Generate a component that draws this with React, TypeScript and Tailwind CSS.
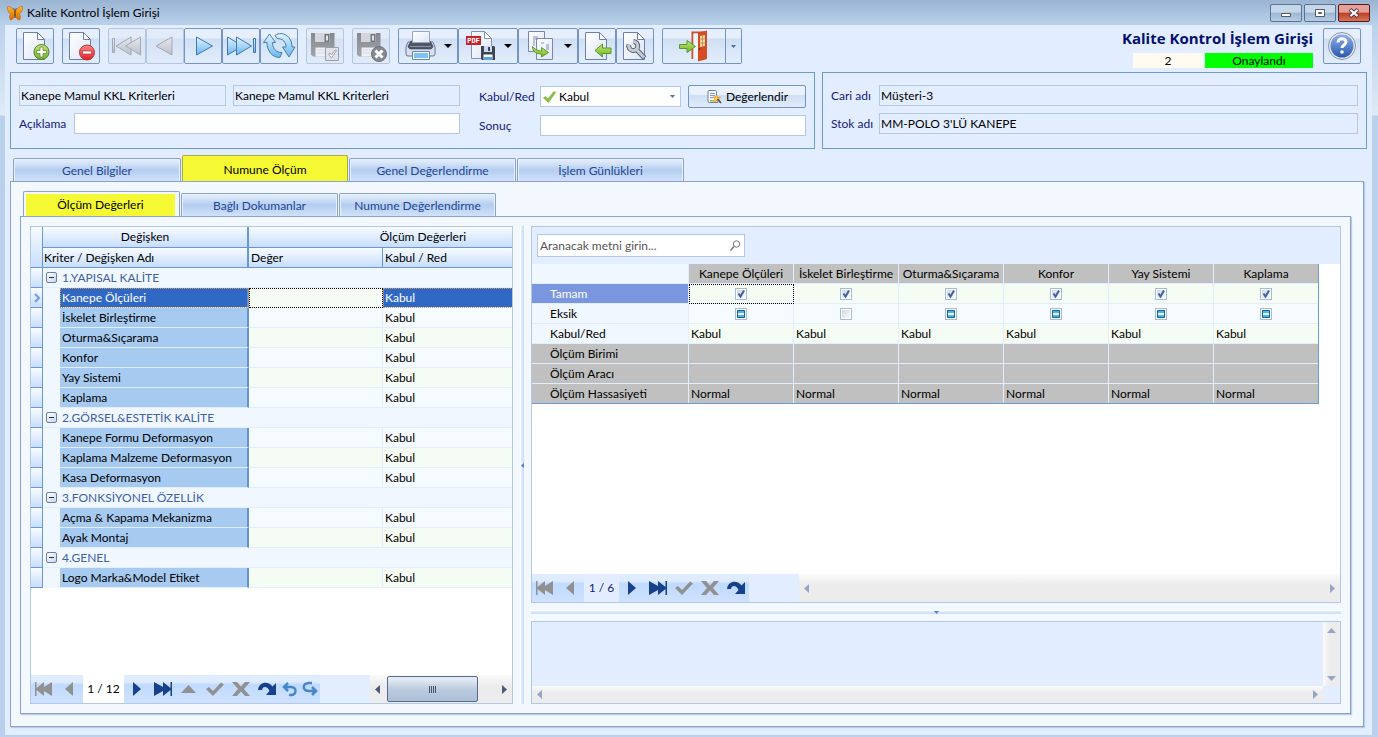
import type { ReactNode } from "react";

const toolButton =
  "h-9 flex shrink-0 items-center rounded-[2px] border border-[#7394c4] bg-linear-to-b from-[#e6effb] from-25% via-[#cfdff3] via-30% to-[#e3eefc]";
const toolButtonOff =
  "h-9 w-[38px] flex shrink-0 items-center rounded-[2px] border border-[#b3c6e0] bg-linear-to-b from-[#e2ebf8] from-25% via-[#d5e2f4] via-30% to-[#e0ebfa]";
const readOnlyBox =
  "h-[21px] min-w-0 border border-[#b3c8e4] bg-[#e2eeff] px-px text-black outline-none";
const editBox =
  "h-[21px] min-w-0 border border-[#b3c8e4] bg-white px-px text-black outline-none";
const headerFill = "bg-linear-to-b from-[#f8fbff] to-[#c7defd]";

interface IconProps {
  width?: number;
  children: ReactNode;
}

const Icon = ({ width = 36, children }: IconProps) => (
  <svg
    width={width}
    height="34"
    viewBox={`0 0 ${width} 34`}
    className="shrink-0"
    aria-hidden="true"
  >
    {children}
  </svg>
);

const Gradients = () => (
  <svg width="0" height="0" className="absolute" aria-hidden="true">
    <defs>
      <linearGradient id="paper" x1="0" y1="0" x2="1" y2="1">
        <stop offset="0" stopColor="#ffffff" />
        <stop offset="1" stopColor="#dde6f5" />
      </linearGradient>
      <linearGradient id="blue" x1="0" y1="0" x2="0" y2="1">
        <stop offset="0" stopColor="#e2f4ff" />
        <stop offset="1" stopColor="#6cb6ee" />
      </linearGradient>
      <linearGradient id="gray" x1="0" y1="0" x2="0" y2="1">
        <stop offset="0" stopColor="#e6e8ec" />
        <stop offset="1" stopColor="#bcc0c8" />
      </linearGradient>
      <linearGradient id="green" x1="0" y1="0" x2="0" y2="1">
        <stop offset="0" stopColor="#c5e878" />
        <stop offset="1" stopColor="#6db522" />
      </linearGradient>
      <linearGradient id="red" x1="0" y1="0" x2="0" y2="1">
        <stop offset="0" stopColor="#ff8a84" />
        <stop offset="1" stopColor="#e01f26" />
      </linearGradient>
      <linearGradient id="help" x1="0" y1="0" x2="0" y2="1">
        <stop offset="0" stopColor="#8db0e8" />
        <stop offset="1" stopColor="#2c59ad" />
      </linearGradient>
      <linearGradient id="wing" x1="0" y1="0" x2="0" y2="1">
        <stop offset="0" stopColor="#ffb52a" />
        <stop offset="1" stopColor="#d86b00" />
      </linearGradient>
      <linearGradient id="metal" x1="0" y1="0" x2="0" y2="1">
        <stop offset="0" stopColor="#85888e" />
        <stop offset="1" stopColor="#a0a3a8" />
      </linearGradient>
    </defs>
  </svg>
);

const Page = () => (
  <>
    <path d="M6.500 3.500h14l7 7v20h-21z" fill="url(#paper)" stroke="#6d7fae" />
    <path d="M20.500 3.500v7h7z" fill="#fff" stroke="#6d7fae" strokeLinejoin="round" />
  </>
);

const Floppy = () => (
  <>
    <path d="M4 4h23.500v23.500H6l-2-2z" fill="url(#metal)" />
    <path d="M8 4h15v9H8z" fill="#d3d6dc" />
    <path d="M17.500 5h5v8h-5z" fill="#73767c" />
    <path d="M19 6.500h2v5h-2z" fill="#e3e6ea" />
    <path d="M8.500 18.500h15v9h-15z" fill="#eceff4" />
    <path d="M10 21h12M10 24h12" stroke="#d6dae1" />
  </>
);

const Caret = () => (
  <svg width="8" height="4" viewBox="0 0 8 4" className="shrink-0" aria-hidden="true">
    <path d="M0 0h8L4 4z" fill="#000" />
  </svg>
);

const Toolbar = () => (
  <div className="flex gap-2">
    <button aria-label="Yeni" className={`${toolButton} w-[38px]`}>
      <Icon>
        <Page />
        <circle cx="24.500" cy="23" r="7.500" fill="url(#green)" stroke="#56792f" />
        <path
          d="M23 18h3v3.500h3.500v3H26V28h-3v-3.500h-3.500v-3H23z"
          fill="#fff"
          stroke="#5d8a2c"
          strokeWidth=".8"
        />
      </Icon>
    </button>
    <button aria-label="Sil" className={`${toolButton} w-[38px]`}>
      <Icon>
        <Page />
        <circle cx="24" cy="23.500" r="7.500" fill="url(#red)" stroke="#b53039" />
        <path d="M19.500 22h9v3h-9z" fill="#fff" stroke="#a93236" strokeWidth=".7" />
      </Icon>
    </button>
    <div className="flex">
      <button aria-label="İlk kayıt" className={toolButtonOff}>
        <Icon>
          <g fill="url(#gray)" stroke="#a3a9b5">
            <path d="M3.500 9.500h2v14h-2z" />
            <path d="M22 8v18L7 17z" />
            <path d="M31.500 8v18l-15-9z" />
          </g>
        </Icon>
      </button>
      <button aria-label="Önceki kayıt" className={toolButtonOff}>
        <Icon>
          <path d="M25 8v18L9 17z" fill="url(#gray)" stroke="#a3a9b5" />
        </Icon>
      </button>
      <button aria-label="Sonraki kayıt" className={`${toolButton} w-[38px]`}>
        <Icon>
          <path d="M11.500 8v18l16-9z" fill="url(#blue)" stroke="#3f78b8" />
        </Icon>
      </button>
      <button aria-label="Son kayıt" className={`${toolButton} w-[38px]`}>
        <Icon>
          <g fill="url(#blue)" stroke="#3f78b8">
            <path d="M4.500 8v18l15-9z" />
            <path d="M13.500 8v18l15-9z" />
            <path d="M30.500 9.500h2v14h-2z" />
          </g>
        </Icon>
      </button>
      <button aria-label="Yenile" className={`${toolButton} w-[38px]`}>
        <Icon>
          <g fill="url(#blue)" stroke="#3f7fb0" strokeLinejoin="round">
            <path d="M8.500 5 2.500 13.500H6C6 22 11 28.500 19 28.500l2-5c-6 0-9.500-4-9.500-10h3z" />
            <path d="M28 28 21.500 18H25c0-5-3-8.500-9-8.500l-2-3c2-1.500 4-2 6-2 7 .5 11 6.500 11 13.500h3z" />
          </g>
        </Icon>
      </button>
    </div>
    <button aria-label="Kaydet" className={toolButtonOff}>
      <Icon>
        <Floppy />
        <path d="M18.500 18.500h13v13h-13z" fill="#dfe3e9" stroke="#9a9fa8" />
        <path
          d="m21.500 25 3 4 5-7.500-1.500-.5-3.500 5-1.500-2z"
          fill="#fff"
          stroke="#8a8f98"
          strokeWidth=".8"
        />
      </Icon>
    </button>
    <button aria-label="Vazgeç" className={toolButtonOff}>
      <Icon>
        <Floppy />
        <circle cx="26" cy="25" r="7.500" fill="#85888e" stroke="#6f7278" />
        <path d="m22.500 21.500 7 7m0-7-7 7" stroke="#fff" strokeWidth="3" />
      </Icon>
    </button>
    <div className="flex">
      <button aria-label="Yazdır" className={`${toolButton} w-[60px]`}>
        <Icon width={45}>
          <path d="M9 13h25l2 5v7q0 2-2 2H9q-2 0-2-2v-7z" fill="#d9dfec" stroke="#6b7896" />
          <path
            d="M12 12h19l3 5q0 2-2 3H11q-2-1-2-3z"
            fill="#4e5668"
            stroke="#373e4d"
            strokeWidth=".6"
          />
          <path d="M13.500 2.500h17v11h-17z" fill="url(#paper)" stroke="#98a6c6" />
          <path d="M11 17.500h21" stroke="#8a93a6" />
          <path d="M13.500 22.500h17v8h-17z" fill="#fff" stroke="#5f88bd" />
          <path d="M15 24h14v5H15z" fill="#7ec1f3" />
        </Icon>
        <Caret />
      </button>
      <button aria-label="PDF olarak kaydet" className={`${toolButton} w-[60px]`}>
        <Icon width={45}>
          <path d="M12.500 2.500h13l7 7v20h-20z" fill="url(#paper)" stroke="#8492b8" />
          <path d="M25.500 2.500v7h7z" fill="#fff" stroke="#8492b8" />
          <path d="M7 7h15v9H7z" fill="#c5242c" />
          <text
            x="14.500"
            y="14"
            textAnchor="middle"
            fill="#fff"
            fontSize="7"
            fontWeight="bold"
            fontFamily="Liberation Mono, monospace"
          >
            PDF
          </text>
          <path d="M22 17h13l1 1v13H23l-1-1z" fill="#3c4556" />
          <path d="M25 17h8v6h-8z" fill="#cdd9ee" />
          <path d="M29 18h2v4h-2z" fill="#3c4556" />
          <path d="M24.500 25.500h9v5h-9z" fill="#fff" />
          <path d="M25 28h8v3h-8z" fill="#58a4de" />
        </Icon>
        <Caret />
      </button>
      <button aria-label="Kopyala" className={`${toolButton} w-[60px]`}>
        <Icon width={45}>
          <path d="M9.500 2.500h16v20h-16z" fill="url(#paper)" stroke="#7787b2" />
          <path d="M17.500 9.500h16v21h-16z" fill="url(#paper)" stroke="#7787b2" />
          <path
            d="M14 8h5M14 10h5M14 12h2M14 14h2M14 16h2M22 14h3M27 16h3M27 18h3M27 20h3"
            stroke="#8291b8"
          />
          <path
            d="M13.500 17.500c3 3.500 6 4.500 9 4.500v-3.500l7 5-7 4.500v-3c-5 0-9-2-9-7.500z"
            fill="url(#green)"
            stroke="#5e962b"
          />
        </Icon>
        <Caret />
      </button>
      <button aria-label="Aktar" className={`${toolButton} w-[38px]`}>
        <Icon>
          <Page />
          <path
            d="m16 21.500 7.500-6.500v4H32v5.500h-8.500V28z"
            fill="url(#green)"
            stroke="#5e962b"
          />
        </Icon>
      </button>
      <button aria-label="Ayarlar" className={`${toolButton} w-[38px]`}>
        <Icon>
          <Page />
          <g fill="none">
            <path
              d="M12 15.500a4.500 4.500 0 1 0 4.500-3M19 20l8.500 9"
              stroke="#5f6776"
              strokeWidth="5"
            />
            <path
              d="M12 15.500a4.500 4.500 0 1 0 4.500-3M19 20l8 8.500"
              stroke="#c6ccd6"
              strokeWidth="3"
            />
          </g>
        </Icon>
      </button>
    </div>
    <div className="flex">
      <button aria-label="Çıkış" className={`${toolButton} w-[64px] rounded-r-none`}>
        <Icon width={62}>
          <path d="M29.500 30V3.500H42" fill="none" stroke="#c8502a" strokeWidth="2" />
          <path d="M30.500 30V4.500H35V30z" fill="#f1f4fa" />
          <path d="m35 3.500 9-2V30l-9 2.500z" fill="#d54b24" />
          <path d="M37 7 42 6v11l-5 1z" fill="#f4dca8" />
          <path d="M39.500 6.500v11M37 10h5M37 14h5" stroke="#b98443" strokeWidth=".8" />
          <path d="M36.500 19v2" stroke="#7d2a12" strokeWidth="1.500" />
          <path
            d="M16.500 15.500H24v-4l8.500 6-8.500 6v-4h-7.500z"
            fill="url(#green)"
            stroke="#5e962b"
          />
        </Icon>
      </button>
      <button
        aria-label="Çıkış seçenekleri"
        className={`${toolButton} w-4 justify-center rounded-l-none border-l-0`}
      >
        <svg width="5" height="3" viewBox="0 0 5 3" aria-hidden="true">
          <path d="M0 0h5L2.500 3z" fill="#4a72a8" />
        </svg>
      </button>
    </div>
  </div>
);

const TitleBar = () => (
  <header className="flex h-[25px] items-start pr-2 pl-[7px]">
    <h1 className="flex flex-1 items-center gap-1 pt-1 leading-[18px]">
      <svg width="16" height="16" viewBox="0 0 16 16" aria-hidden="true">
        <path
          d="M8 7C6 3 3 1 .5 1.500 0 5 1.500 8 4 9c-2 1-2 4-.5 6 2.500 0 3.500-3 4.500-6 1 3 2 6 4.500 6 1.500-2 1.500-5-.5-6 2.500-1 4-4 3.500-7.500C13 1 10 3 8 7z"
          fill="url(#wing)"
          stroke="#b25a06"
          strokeWidth=".5"
        />
        <path d="M8 5.500v7.500" stroke="#4d2500" />
        <path d="M8 5.500 6.500 3M8 5.500 9.500 3" stroke="#4d2500" strokeWidth=".6" />
      </svg>
      Kalite Kontrol İşlem Girişi
    </h1>
    <div className="flex gap-0.5 pt-1">
      <button
        aria-label="Simge durumuna küçült"
        className="flex h-[18px] w-8 items-center justify-center rounded-[2px] border border-[#5b7292] bg-linear-to-b from-[#c6d7ea] from-45% via-[#9db6d2] via-50% to-[#b7cde5]"
      >
        <svg width="12" height="12" viewBox="0 0 12 12" aria-hidden="true">
          <path d="M1.500 6.500h9v3h-9z" fill="#fff" stroke="#525b68" />
        </svg>
      </button>
      <button
        aria-label="Ekranı kapla"
        className="flex h-[18px] w-8 items-center justify-center rounded-[2px] border border-[#5b7292] bg-linear-to-b from-[#c6d7ea] from-45% via-[#9db6d2] via-50% to-[#b7cde5]"
      >
        <svg width="12" height="12" viewBox="0 0 12 12" aria-hidden="true">
          <path d="M1.500 2.500h9v7h-9z" fill="#fff" stroke="#525b68" />
          <path d="M4.500 5.500h3v1h-3z" fill="#fff" stroke="#525b68" />
        </svg>
      </button>
      <button
        aria-label="Kapat"
        className="flex h-[18px] w-8 items-center justify-center rounded-[2px] border border-[#5a1a1c] bg-linear-to-b from-[#e2a096] from-45% via-[#bd3c22] via-50% to-[#d2745c]"
      >
        <svg width="12" height="12" viewBox="0 0 12 12" aria-hidden="true">
          <path d="m2 2.500 8 7m0-7-8 7" stroke="#5b3a44" strokeWidth="4" />
          <path d="m2.500 3 7 6m0-6-7 6" stroke="#fff" strokeWidth="2.200" />
        </svg>
      </button>
    </div>
  </header>
);

const Summary = () => (
  <section className="flex gap-[7px]">
    <div className="grid h-[77px] w-[805px] shrink-0 grid-cols-[441px_1fr] gap-x-[19px] border border-[#6b9bd4] px-2 pt-3">
      <div className="flex flex-col gap-[7px]">
        <div className="flex gap-[7px]">
          <input
            aria-label="Kriter kodu"
            readOnly
            defaultValue="Kanepe Mamul KKL Kriterleri"
            className={`${readOnlyBox} w-[207px]`}
          />
          <input
            aria-label="Kriter adı"
            readOnly
            defaultValue="Kanepe Mamul KKL Kriterleri"
            className={`${readOnlyBox} flex-1`}
          />
        </div>
        <div className="flex items-center">
          <label htmlFor="aciklama" className="w-[55px] text-[#14207a]">
            Açıklama
          </label>
          <input id="aciklama" className={`${editBox} flex-1`} />
        </div>
      </div>
      <div className="flex flex-col gap-[7px]">
        <div className="flex h-[23px] items-center">
          <label htmlFor="kabul" className="w-[61px] text-[#14207a]">
            Kabul/Red
          </label>
          <div className="relative w-[141px]">
            <select
              id="kabul"
              className={`${editBox} block w-full appearance-none pl-[18px]`}
            >
              <option>Kabul</option>
              <option>Red</option>
            </select>
            <svg
              width="13"
              height="12"
              viewBox="0 0 13 12"
              className="pointer-events-none absolute top-[5px] left-[3px]"
              aria-hidden="true"
            >
              <path
                d="m.5 7 2-1.500L5 8l6-7.500 1.500 1L5.500 11.500z"
                fill="#8cc63f"
                stroke="#6ca12c"
                strokeWidth=".6"
              />
            </svg>
            <svg
              width="5"
              height="3"
              viewBox="0 0 5 3"
              className="pointer-events-none absolute top-[9px] right-[6px]"
              aria-hidden="true"
            >
              <path d="M0 0h5L2.500 3z" fill="#4a72a8" />
            </svg>
          </div>
          <button className="ml-[7px] flex h-[23px] flex-1 items-center justify-center gap-1 rounded-[2px] border border-[#7394c4] bg-linear-to-b from-[#e9f1fc] from-40% via-[#cfdff4] via-45% to-[#e0ecfb]">
            <svg width="16" height="16" viewBox="0 0 16 16" aria-hidden="true">
              <path
                d="M2 2.500Q2 1.500 3 1.500h6.500q1 0 1 1v9H12v2H3.500Q2 13.500 2 12z"
                fill="#f6f9ff"
                stroke="#6e7fae"
              />
              <path d="M4 4.500h5M4 6.500h5M4 8.500h3" stroke="#8c9bc2" />
              <path d="M4 11h4v1.500H4z" fill="#8cc63f" />
              <path
                d="m10.500 6 1 2.500 3-.5-2 2 1.500 3-3-1.500-2.500 1.500.5-3-2-2 2.500-.2z"
                fill="#ffd23c"
                stroke="#e0841c"
                strokeWidth=".7"
              />
              <path d="m11.500 10 3.500 4" stroke="#444b5c" strokeWidth="1.500" />
            </svg>
            Değerlendir
          </button>
        </div>
        <div className="flex items-center">
          <label htmlFor="sonuc" className="w-[61px] text-[#14207a]">
            Sonuç
          </label>
          <input id="sonuc" className={`${editBox} flex-1`} />
        </div>
      </div>
    </div>
    <div className="flex h-[77px] flex-1 flex-col gap-[7px] border border-[#6b9bd4] px-2 pt-3">
      <div className="flex items-center">
        <label htmlFor="cari" className="w-12 text-[#14207a]">
          Cari adı
        </label>
        <input id="cari" readOnly defaultValue="Müşteri-3" className={`${readOnlyBox} flex-1`} />
      </div>
      <div className="flex items-center">
        <label htmlFor="stok" className="w-12 text-[#14207a]">
          Stok adı
        </label>
        <input
          id="stok"
          readOnly
          defaultValue="MM-POLO 3'LÜ KANEPE"
          className={`${readOnlyBox} flex-1`}
        />
      </div>
    </div>
  </section>
);

const idleTab =
  "h-[23px] rounded-t-[2px] border border-b-0 border-[#8ba3cc] pt-0.5 text-[#1f4596] shadow-[inset_1px_1px_0_#e8f1ff,inset_-1px_0_0_#e8f1ff] bg-linear-to-b from-[#dfeafa] from-10% via-[#b4cef0] via-50% to-[#d0e1fa]";

const groups = [
  {
    title: "1.YAPISAL KALİTE",
    rows: [
      "Kanepe Ölçüleri",
      "İskelet Birleştirme",
      "Oturma&Sıçarama",
      "Konfor",
      "Yay Sistemi",
      "Kaplama",
    ],
  },
  {
    title: "2.GÖRSEL&ESTETİK KALİTE",
    rows: ["Kanepe Formu Deformasyon", "Kaplama Malzeme Deformasyon", "Kasa Deformasyon"],
  },
  { title: "3.FONKSİYONEL ÖZELLİK", rows: ["Açma & Kapama Mekanizma", "Ayak Montaj"] },
  { title: "4.GENEL", rows: ["Logo Marka&Model Etiket"] },
];

// rows that carry the greenish stripe
const striped = [
  "Kanepe Ölçüleri",
  "Oturma&Sıçarama",
  "Yay Sistemi",
  "Kaplama Malzeme Deformasyon",
  "Ayak Montaj",
  "Logo Marka&Model Etiket",
];

const Indicator = ({ current = false }: { current?: boolean }) => (
  <td className={`border-r border-b border-[#6b97d3] p-0 ${headerFill}`}>
    {current && (
      <svg width="11" height="10" viewBox="0 0 11 10" aria-hidden="true">
        <path d="m4 1 4 4-4 4" fill="none" stroke="#6f9fe0" strokeWidth="2" />
      </svg>
    )}
  </td>
);

const DataRow = ({ name }: { name: string }) => {
  const current = name === "Kanepe Ölçüleri";
  const stripe = striped.includes(name) ? "bg-[#f5fcf3]" : "bg-[#f6fbff]";
  return (
    <tr className="h-5">
      <Indicator current={current} />
      <td className="bg-[#f0f7ff] p-0" />
      <td
        className={`border-r-2 border-b border-r-[#6492d2] border-b-[#e2eeff] p-0 pl-0.5 leading-[19px] ${
          current
            ? "bg-[#2f69c5] text-white outline-1 -outline-offset-1 outline-dotted outline-[#d99a4a]"
            : "bg-[#a6caf0]"
        }`}
      >
        {name}
      </td>
      <td
        className={`border-r border-b border-[#e2eeff] p-0 ${stripe} ${
          current ? "outline-1 -outline-offset-1 outline-dotted outline-black" : ""
        }`}
      />
      <td
        className={`border-b border-[#e2eeff] p-0 pl-0.5 leading-[19px] ${
          current
            ? "bg-[#2f69c5] text-white outline-1 -outline-offset-1 outline-dotted outline-[#d99a4a]"
            : stripe
        }`}
      >
        Kabul
      </td>
    </tr>
  );
};

const CriteriaTable = () => (
  <table className="w-[566px] table-fixed border-separate border-spacing-0">
    <colgroup>
      <col className="w-3" />
      <col className="w-[17px]" />
      <col className="w-[189px]" />
      <col className="w-[134px]" />
      <col className="w-[214px]" />
    </colgroup>
    <thead>
      <tr className="h-[21px]">
        <td rowSpan={2} className={`border-r border-b border-[#6b97d3] p-0 ${headerFill}`} />
        <th
          colSpan={2}
          className={`border-r-2 border-b border-[#6b97d3] p-0 font-normal ${headerFill}`}
        >
          Değişken
        </th>
        <th colSpan={2} className={`border-b border-[#6b97d3] p-0 font-normal ${headerFill}`}>
          Ölçüm Değerleri
        </th>
      </tr>
      <tr className="h-5">
        <th
          colSpan={2}
          className={`border-r-2 border-b border-[#6b97d3] p-0 pl-px text-left leading-[19px] font-normal ${headerFill}`}
        >
          Kriter / Değişken Adı
        </th>
        <th
          className={`border-r border-b border-[#6b97d3] p-0 pl-0.5 text-left leading-[19px] font-normal ${headerFill}`}
        >
          Değer
        </th>
        <th
          className={`border-b border-[#6b97d3] p-0 pl-0.5 text-left leading-[19px] font-normal ${headerFill}`}
        >
          Kabul / Red
        </th>
      </tr>
    </thead>
    {groups.map((group) => (
      <tbody key={group.title}>
        <tr className="h-5">
          <Indicator />
          <td
            colSpan={4}
            className="border-b border-[#e2eeff] bg-[#f0f7ff] p-0 leading-[19px] text-[#41619f]"
          >
            <div className="flex items-center gap-[5px] pl-[3px]">
              <button
                aria-label={`${group.title} daralt`}
                className="flex size-[11px] items-center justify-center rounded-[2px] border border-[#6a7fa6] bg-linear-to-br from-white to-[#c9d6ea]"
              >
                <span className="h-px w-[5px] bg-[#22304d]" />
              </button>
              {group.title}
            </div>
          </td>
        </tr>
        {group.rows.map((row) => (
          <DataRow key={row} name={row} />
        ))}
      </tbody>
    ))}
  </table>
);

interface NavButtonProps {
  label: string;
  d: string;
  tone?: string;
  stroke?: boolean;
  className?: string;
}

const NavButton = ({
  label,
  d,
  tone = "#919191",
  stroke = false,
  className = "w-[26px]",
}: NavButtonProps) => (
  <button aria-label={label} className={`flex h-7 items-center justify-center ${className}`}>
    <svg width="20" height="16" viewBox="0 0 20 16" className="shrink-0" aria-hidden="true">
      {stroke ? (
        <path d={d} fill="none" stroke={tone} strokeWidth="2.500" />
      ) : (
        <path d={d} fill={tone} />
      )}
    </svg>
  </button>
);

const icons = {
  first: "M1 1h1.500v6L10 1v5l8-5v14l-8-5v5L2.500 9v6H1z",
  prev: "M13 1v14L5 8z",
  next: "M6 1v14l8-7z",
  last: "M19 1h-1.500v6L10 1v5L1 1v14l9-5v5l7.500-6v6H19z",
  up: "M2 12h15L9.500 4z",
  check: "m1 8 3-2 4 4 8-8.500 3 2L8 15z",
  cross: "M1 1h5l4 4.500L14 1h5l-6 7 6 7h-5l-4-4.500L6 15H1l6-7z",
  redo: "M1 9C2 0 12 0 15.500 5.500L19 2v12H9l3.500-4C10.500 5 5.500 5 5 9z",
  undo: "M8 2 4 6l4 4M4 6h7c6 0 6 8 0 8H9",
  forward: "m12 6 4 4-4 4M16 10H9c-7 0-7-8 0-8h3",
};

const navFill = "bg-linear-to-b from-[#dfecff] from-25% via-[#bfdaff] via-35% to-[#cfe2fe]";
const navy = "#17428b";
const trackFill = "bg-linear-to-b from-[#fafafa] to-[#ececec] to-40%";

interface ArrowProps {
  label: string;
  d: string;
  tone?: string;
}

const ScrollArrow = ({ label, d, tone = "#97a5c8" }: ArrowProps) => (
  <button aria-label={label} className="flex size-4 shrink-0 items-center justify-center">
    <svg width="9" height="9" viewBox="0 0 9 9" aria-hidden="true">
      <path d={d} fill={tone} />
    </svg>
  </button>
);

const leftArrow = "M6 0v9L1 4.500z";
const rightArrow = "M2 0v9l5-4.500z";
const upArrow = "M0 7h9L4.500 2z";
const downArrow = "M0 2h9L4.500 7z";

const CriteriaPanel = () => (
  <section className="flex w-[483px] shrink-0 flex-col border border-[#b3c8e4] bg-white">
    <div className="flex-1 overflow-hidden">
      <CriteriaTable />
    </div>
    <div className="flex h-7 bg-[#e2eeff]">
      <div className={`flex ${navFill}`}>
        <NavButton label="İlk" d={icons.first} />
        <NavButton label="Önceki" d={icons.prev} />
        <span className="w-[41px] bg-white text-center leading-7">1 / 12</span>
        <NavButton label="Sonraki" d={icons.next} tone={navy} />
        <NavButton label="Son" d={icons.last} tone={navy} />
        <NavButton label="Yukarı" d={icons.up} />
        <NavButton label="Onayla" d={icons.check} />
        <NavButton label="İptal" d={icons.cross} />
        <NavButton label="Yenile" d={icons.redo} tone={navy} />
        <NavButton label="Geri al" d={icons.undo} tone="#4a86c4" stroke className="w-5" />
        <NavButton label="İleri al" d={icons.forward} tone="#4a86c4" stroke className="w-5" />
      </div>
      <div className={`ml-auto flex w-[142px] items-center ${trackFill}`}>
        <ScrollArrow label="Sola kaydır" d={leftArrow} tone="#4b5878" />
        <button
          aria-label="Kaydırma çubuğu"
          className="mr-auto ml-px flex h-[26px] w-[91px] items-center justify-center gap-px rounded-[2px] border border-[#566a91] bg-linear-to-b from-[#e3eaf3] from-10% via-[#bccbde] via-50% to-[#adbfd6]"
        >
          <span className="h-[7px] w-px bg-[#44516c]" />
          <span className="h-[7px] w-px bg-[#44516c]" />
          <span className="h-[7px] w-px bg-[#44516c]" />
          <span className="h-[7px] w-px bg-[#44516c]" />
        </button>
        <ScrollArrow label="Sağa kaydır" d={rightArrow} tone="#4b5878" />
      </div>
    </div>
  </section>
);

const columns = [
  "Kanepe Ölçüleri",
  "İskelet Birleştirme",
  "Oturma&Sıçarama",
  "Konfor",
  "Yay Sistemi",
  "Kaplama",
];

type BoxState = "on" | "off" | "mixed";

const Tick = ({ label, state }: { label: string; state: BoxState }) => (
  <span className="relative mx-auto block size-3">
    <input
      type="checkbox"
      aria-label={label}
      defaultChecked={state === "on"}
      className="block size-3 appearance-none border border-[#a3bbdd] bg-linear-to-br from-[#cfd4da] to-white shadow-[inset_0_0_0_1px_#fff]"
    />
    <svg
      width="12"
      height="12"
      viewBox="0 0 12 12"
      className="pointer-events-none absolute inset-0"
      aria-hidden="true"
    >
      {state === "on" && (
        <path d="m3.500 5.500 2 3 3.500-6" fill="none" stroke="#3d62a0" strokeWidth="2" />
      )}
      {state === "mixed" && (
        <>
          <path d="M2.500 2.500h7v7h-7z" fill="#4cb4e6" stroke="#1b618f" />
          <path d="M3 5h6v2H3z" fill="#e3f6ff" />
        </>
      )}
    </svg>
  </span>
);

const labelCell =
  "border-r border-b border-[#e2eeff] p-0 pl-[18px] text-left leading-[19px] font-normal";
const valueCell = "border-r border-b border-[#e2eeff] p-0 last:border-r-0";

const DetailTable = () => (
  <table className="w-[787px] table-fixed border-separate border-spacing-0 border-r border-b border-[#6b9bd4]">
    <colgroup>
      <col className="w-[157px]" />
      <col className="w-[105px]" />
      <col className="w-[105px]" />
      <col className="w-[105px]" />
      <col className="w-[105px]" />
      <col className="w-[105px]" />
      <col className="w-[104px]" />
    </colgroup>
    <thead>
      <tr className="h-5">
        <td className="border-r border-b border-[#e2eeff] bg-[#f0f7ff] p-0" />
        {columns.map((column) => (
          <th
            key={column}
            className={`${valueCell} overflow-hidden bg-[#c0c0c0] leading-[19px] font-normal whitespace-nowrap`}
          >
            {column}
          </th>
        ))}
      </tr>
    </thead>
    <tbody>
      <tr className="h-5">
        <th className={`${labelCell} bg-[#7a96df] text-white`}>Tamam</th>
        {columns.map((column, i) => (
          <td
            key={column}
            className={`${valueCell} bg-[#f5fcf3] ${
              i === 0 ? "outline-1 -outline-offset-1 outline-dotted outline-black" : ""
            }`}
          >
            <Tick label={`${column} tamam`} state="on" />
          </td>
        ))}
      </tr>
      <tr className="h-5">
        <th className={`${labelCell} bg-[#f0f7ff]`}>Eksik</th>
        {columns.map((column, i) => (
          <td key={column} className={`${valueCell} bg-[#f6fbff]`}>
            <Tick label={`${column} eksik`} state={i === 1 ? "off" : "mixed"} />
          </td>
        ))}
      </tr>
      <tr className="h-5">
        <th className={`${labelCell} bg-[#f0f7ff]`}>Kabul/Red</th>
        {columns.map((column) => (
          <td key={column} className={`${valueCell} bg-[#f5fcf3] pl-0.5 leading-[19px]`}>
            Kabul
          </td>
        ))}
      </tr>
      {["Ölçüm Birimi", "Ölçüm Aracı"].map((row) => (
        <tr key={row} className="h-5">
          <th className={`${labelCell} bg-[#c0c0c0]`}>{row}</th>
          {columns.map((column) => (
            <td key={column} className={`${valueCell} bg-[#c0c0c0]`} />
          ))}
        </tr>
      ))}
      <tr className="h-[19px]">
        <th className="border-r border-[#e2eeff] bg-[#c0c0c0] p-0 pl-[18px] text-left leading-[19px] font-normal">
          Ölçüm Hassasiyeti
        </th>
        {columns.map((column) => (
          <td
            key={column}
            className="border-r border-[#e2eeff] bg-[#c0c0c0] p-0 pl-0.5 leading-[19px] last:border-r-0"
          >
            Normal
          </td>
        ))}
      </tr>
    </tbody>
  </table>
);

const DetailPanel = () => (
  <section className="flex flex-1 flex-col border border-[#b3c8e4] bg-white">
    <div className="h-[37px] bg-[#e2eeff] pt-[7px] pl-[5px]">
      <div className="relative w-[208px]">
        <input
          type="search"
          aria-label="Ara"
          placeholder="Aranacak metni girin..."
          className="block h-[23px] w-full border border-[#b3c8e4] bg-white px-0.5 outline-none placeholder:text-[#555]"
        />
        <svg
          width="11"
          height="11"
          viewBox="0 0 11 11"
          className="pointer-events-none absolute top-1.5 right-1"
          aria-hidden="true"
        >
          <circle cx="6.500" cy="4" r="3.200" fill="none" stroke="#777" />
          <path d="M4 6.500.5 10.500" stroke="#777" strokeWidth="1.500" />
        </svg>
      </div>
    </div>
    <div className="flex-1 overflow-hidden">
      <DetailTable />
    </div>
    <div className="flex h-7 bg-[#e2eeff]">
      <div className={`flex ${navFill}`}>
        <NavButton label="İlk" d={icons.first} />
        <NavButton label="Önceki" d={icons.prev} />
        <span className="w-[35px] bg-[#e2eeff] text-center leading-7 text-[#14207a]">1 / 6</span>
        <NavButton label="Sonraki" d={icons.next} tone={navy} />
        <NavButton label="Son" d={icons.last} tone={navy} />
        <NavButton label="Onayla" d={icons.check} />
        <NavButton label="İptal" d={icons.cross} />
        <NavButton label="Yenile" d={icons.redo} tone={navy} />
      </div>
      <div className={`ml-[50px] flex flex-1 items-center justify-between ${trackFill}`}>
        <ScrollArrow label="Sola kaydır" d={leftArrow} />
        <ScrollArrow label="Sağa kaydır" d={rightArrow} />
      </div>
    </div>
  </section>
);

const MemoPanel = () => (
  <section className="grid h-[83px] grid-cols-[1fr_17px] grid-rows-[1fr_17px] border border-[#b3c8e4] bg-[#e2eeff]">
    <textarea
      aria-label="Açıklama notu"
      readOnly
      className="block size-full resize-none bg-[#e2eeff] outline-none"
    />
    <div className="flex flex-col items-center justify-between bg-linear-to-r from-[#fafafa] to-[#ececec] to-40%">
      <ScrollArrow label="Yukarı kaydır" d={upArrow} />
      <ScrollArrow label="Aşağı kaydır" d={downArrow} />
    </div>
    <div className={`flex items-center justify-between ${trackFill}`}>
      <ScrollArrow label="Sola kaydır" d={leftArrow} />
      <ScrollArrow label="Sağa kaydır" d={rightArrow} />
    </div>
  </section>
);

const App = () => {
  return (
    <div className="flex min-h-screen min-w-[1378px] flex-col bg-[linear-gradient(to_bottom,#9ab4d2_0px,#b9d1ea_25px,#dfebf7_115px,#b9d1ea_116px)] font-[Lato,'Open_Sans',sans-serif] text-[12px] leading-4 text-black">
      <Gradients />
      <TitleBar />
      <main className="mr-1.5 mb-0.5 ml-[5px] flex flex-1 flex-col bg-[#e2eeff] pt-[3px] pr-[5px] pb-2 pl-[5px]">
        <div className="flex h-9 items-start justify-between pr-1.5 pl-1.5">
          <Toolbar />
          <div className="flex gap-2.5">
            <div className="w-[200px]">
              <h2 className="h-[25px] text-right font-['Open_Sans',sans-serif] text-[15px] leading-5 font-bold whitespace-nowrap text-[#05106c]">
                Kalite Kontrol İşlem Girişi
              </h2>
              <div className="flex justify-end gap-0.5 text-center">
                <span className="w-[70px] bg-[#fffaf0] leading-[15px]">2</span>
                <span className="w-[108px] bg-[#00ff00] leading-[15px]">Onaylandı</span>
              </div>
            </div>
            <button aria-label="Yardım" className={`${toolButton} w-[38px]`}>
              <Icon>
                <circle cx="18" cy="17" r="13.500" fill="#e3e8f1" stroke="#8b97ae" />
                <circle cx="18" cy="17" r="11.500" fill="url(#help)" />
                <path
                  d="M14 13.500c0-5 8-5 8-.5 0 3-4 3-4 6"
                  fill="none"
                  stroke="#fff"
                  strokeWidth="3"
                />
                <circle cx="18" cy="23" r="1.800" fill="#fff" />
              </Icon>
            </button>
          </div>
        </div>
        <div className="pt-2">
          <Summary />
        </div>

        <div role="tablist" className="flex items-end gap-px pt-1.5 pl-[3px]">
          <button role="tab" className={`${idleTab} w-[168px]`}>
            Genel Bilgiler
          </button>
          <button
            role="tab"
            aria-selected="true"
            className="h-[26px] w-[166px] rounded-t-[2px] border border-b-0 border-[#a9a94a] bg-[#f5f933] pt-0.5"
          >
            Numune Ölçüm
          </button>
          <button role="tab" className={`${idleTab} w-[167px]`}>
            Genel Değerlendirme
          </button>
          <button role="tab" className={`${idleTab} w-[167px]`}>
            İşlem Günlükleri
          </button>
        </div>
        <div className="mr-[3px] flex flex-1 flex-col border border-[#8ba3cc] bg-[#f3f8ff] px-[9px] pt-[9px] pb-3 shadow-[1px_1px_1px_#b9cbe6]">
          <div role="tablist" className="flex items-end gap-px pl-[3px]">
            <button
              role="tab"
              aria-selected="true"
              className="h-[25px] w-[157px] rounded-t-[2px] border border-b-0 border-[#8ba3cc] bg-[#f3f8ff] pt-0.5 pr-1 pl-0.5"
            >
              <span className="block h-[22px] bg-[#f5f933] leading-[22px]">Ölçüm Değerleri</span>
            </button>
            <button role="tab" className={`${idleTab} w-[157px]`}>
              Bağlı Dokumanlar
            </button>
            <button role="tab" className={`${idleTab} w-[157px]`}>
              Numune Değerlendirme
            </button>
          </div>
          <div className="mr-[3px] flex flex-1 border border-[#8ba3cc] bg-[#f3f8ff] p-[9px] shadow-[1px_1px_1px_#b9cbe6]">
            <CriteriaPanel />
            <div className="mx-[7px] flex w-1 items-center border-l border-white bg-linear-to-r from-[#e2eeff] to-[#c8ddf8]">
              <svg width="3" height="5" viewBox="0 0 3 5" aria-hidden="true">
                <path d="M3 0v5L0 2.500z" fill="#4f84c4" />
              </svg>
            </div>
            <div className="flex flex-1 flex-col">
              <DetailPanel />
              <div className="my-[7px] flex h-1 items-center justify-center border-t border-white bg-linear-to-b from-[#e2eeff] to-[#c8ddf8]">
                <svg width="5" height="3" viewBox="0 0 5 3" aria-hidden="true">
                  <path d="M0 0h5L2.500 3z" fill="#4f84c4" />
                </svg>
              </div>
              <MemoPanel />
            </div>
          </div>
        </div>
      </main>
    </div>
  );
};

export default App;
